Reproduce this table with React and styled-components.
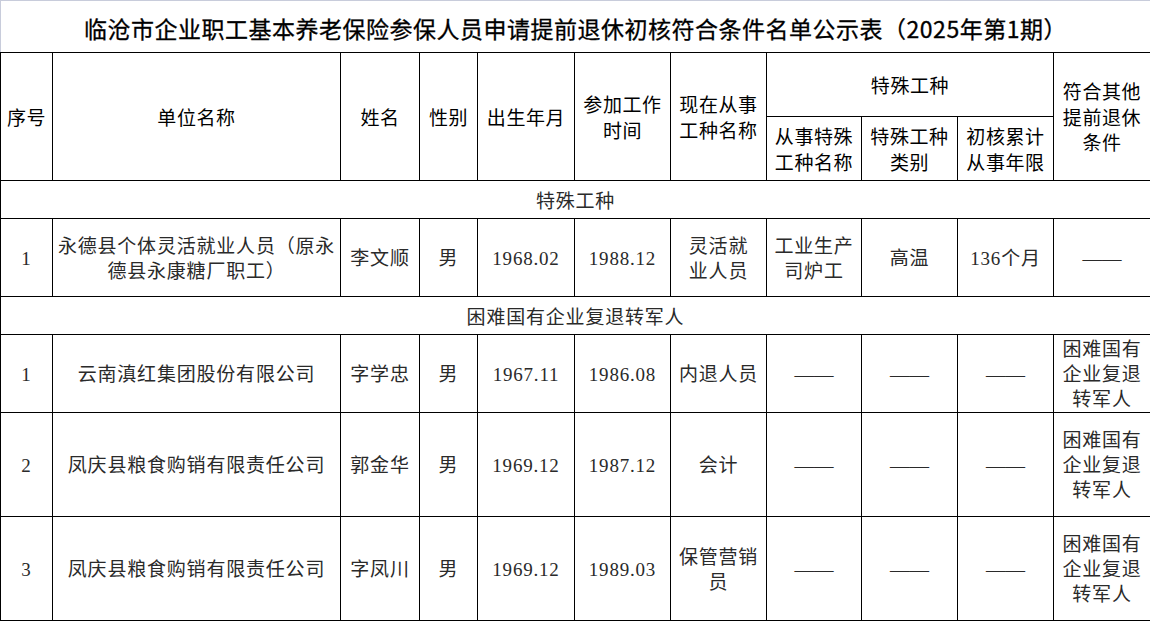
import React from "react";
import styled, { createGlobalStyle } from "styled-components";

const GlobalStyle = createGlobalStyle`
  html, body {
    margin: 0;
    padding: 0;
    background: #ffffff;
  }
  body {
    font-family: "Noto Sans CJK SC", sans-serif;
  }
`;

const Sheet = styled.table`
  width: 1150px;
  border-collapse: collapse;
  table-layout: fixed;
  border: none;
`;

const Row = styled.tr`
  height: ${(p) => p.$h}px;
`;

const TitleCell = styled.td`
  border-top: 1px solid #c8ccdb;
  border-left: 1px solid #c8ccdb;
  border-right: 1px solid #c8ccdb;
  border-bottom: 1px solid #000;
  padding: 3px 0 0 0;
  text-align: center;
  vertical-align: middle;
  font-family: "Noto Sans CJK SC", sans-serif;
  font-size: 23px;
  font-weight: 400;
  -webkit-text-stroke: 0.3px #000;
  letter-spacing: 0.5px;
  color: #000;
  white-space: nowrap;
`;

const HeadCell = styled.th`
  border: 1px solid #000;
  padding: 0;
  text-align: center;
  vertical-align: middle;
  font-family: "Noto Sans CJK SC", sans-serif;
  font-size: 19px;
  font-weight: 400;
  letter-spacing: 0.6px;
  line-height: 25.5px;
  color: #000;
`;

const Cell = styled.td`
  border: 1px solid #000;
  padding: 2px 0 0 0;
  text-align: center;
  vertical-align: middle;
  font-family: "Liberation Serif", "Noto Sans CJK SC", serif;
  font-size: 19px;
  font-weight: 400;
  letter-spacing: 0.8px;
  line-height: 25px;
  color: #2a2a2a;
`;

const SectionCell = styled(Cell)`
  padding-top: 3px;
`;

const Line = styled.span`
  display: block;
`;

const Dash = styled.span`
  font-family: "Liberation Serif", serif;
  font-size: 19.5px;
  letter-spacing: 0;
`;

const widths = [52, 288, 79, 58, 97, 96, 96, 95, 96, 96, 97];

const DASH = { dash: true };

const Lines = ({ value }) => {
  if (value === DASH) return <Dash>——</Dash>;
  return Array.isArray(value)
    ? value.map((l, i) => <Line key={i}>{l}</Line>)
    : value;
};

const VET = ["困难国有", "企业复退", "转军人"];

const sections = [
  {
    name: "特殊工种",
    rows: [
      {
        h: 78,
        cells: [
          "1",
          "永德县个体灵活就业人员（原永德县永康糖厂职工）",
          "李文顺",
          "男",
          "1968.02",
          "1988.12",
          ["灵活就", "业人员"],
          ["工业生产", "司炉工"],
          "高温",
          "136个月",
          DASH,
        ],
      },
    ],
  },
  {
    name: "困难国有企业复退转军人",
    rows: [
      {
        h: 78,
        cells: ["1", "云南滇红集团股份有限公司", "字学忠", "男", "1967.11", "1986.08", "内退人员", DASH, DASH, DASH, VET],
      },
      {
        h: 104,
        cells: ["2", "凤庆县粮食购销有限责任公司", "郭金华", "男", "1969.12", "1987.12", "会计", DASH, DASH, DASH, VET],
      },
      {
        h: 104,
        cells: ["3", "凤庆县粮食购销有限责任公司", "字凤川", "男", "1969.12", "1989.03", ["保管营销", "员"], DASH, DASH, DASH, VET],
      },
    ],
  },
];

export default function App() {
  return (
    <>
      <GlobalStyle />
      <Sheet>
        <colgroup>
          {widths.map((w, i) => (
            <col key={i} style={{ width: w }} />
          ))}
        </colgroup>
        <tbody>
          <Row $h={52}>
            <TitleCell colSpan={11}>
              临沧市企业职工基本养老保险参保人员申请提前退休初核符合条件名单公示表（2025年第1期）
            </TitleCell>
          </Row>
          <Row $h={64}>
            <HeadCell rowSpan={2}>序号</HeadCell>
            <HeadCell rowSpan={2}>单位名称</HeadCell>
            <HeadCell rowSpan={2}>姓名</HeadCell>
            <HeadCell rowSpan={2}>性别</HeadCell>
            <HeadCell rowSpan={2}>出生年月</HeadCell>
            <HeadCell rowSpan={2}>
              <Lines value={["参加工作", "时间"]} />
            </HeadCell>
            <HeadCell rowSpan={2}>
              <Lines value={["现在从事", "工种名称"]} />
            </HeadCell>
            <HeadCell colSpan={3}>特殊工种</HeadCell>
            <HeadCell rowSpan={2}>
              <Lines value={["符合其他", "提前退休", "条件"]} />
            </HeadCell>
          </Row>
          <Row $h={64}>
            <HeadCell>
              <Lines value={["从事特殊", "工种名称"]} />
            </HeadCell>
            <HeadCell>
              <Lines value={["特殊工种", "类别"]} />
            </HeadCell>
            <HeadCell>
              <Lines value={["初核累计", "从事年限"]} />
            </HeadCell>
          </Row>
          {sections.map((s) => (
            <React.Fragment key={s.name}>
              <Row $h={38}>
                <SectionCell colSpan={11}>{s.name}</SectionCell>
              </Row>
              {s.rows.map((r, ri) => (
                <Row key={ri} $h={r.h}>
                  {r.cells.map((c, ci) => (
                    <Cell key={ci}>
                      <Lines value={c} />
                    </Cell>
                  ))}
                </Row>
              ))}
            </React.Fragment>
          ))}
        </tbody>
      </Sheet>
    </>
  );
}
